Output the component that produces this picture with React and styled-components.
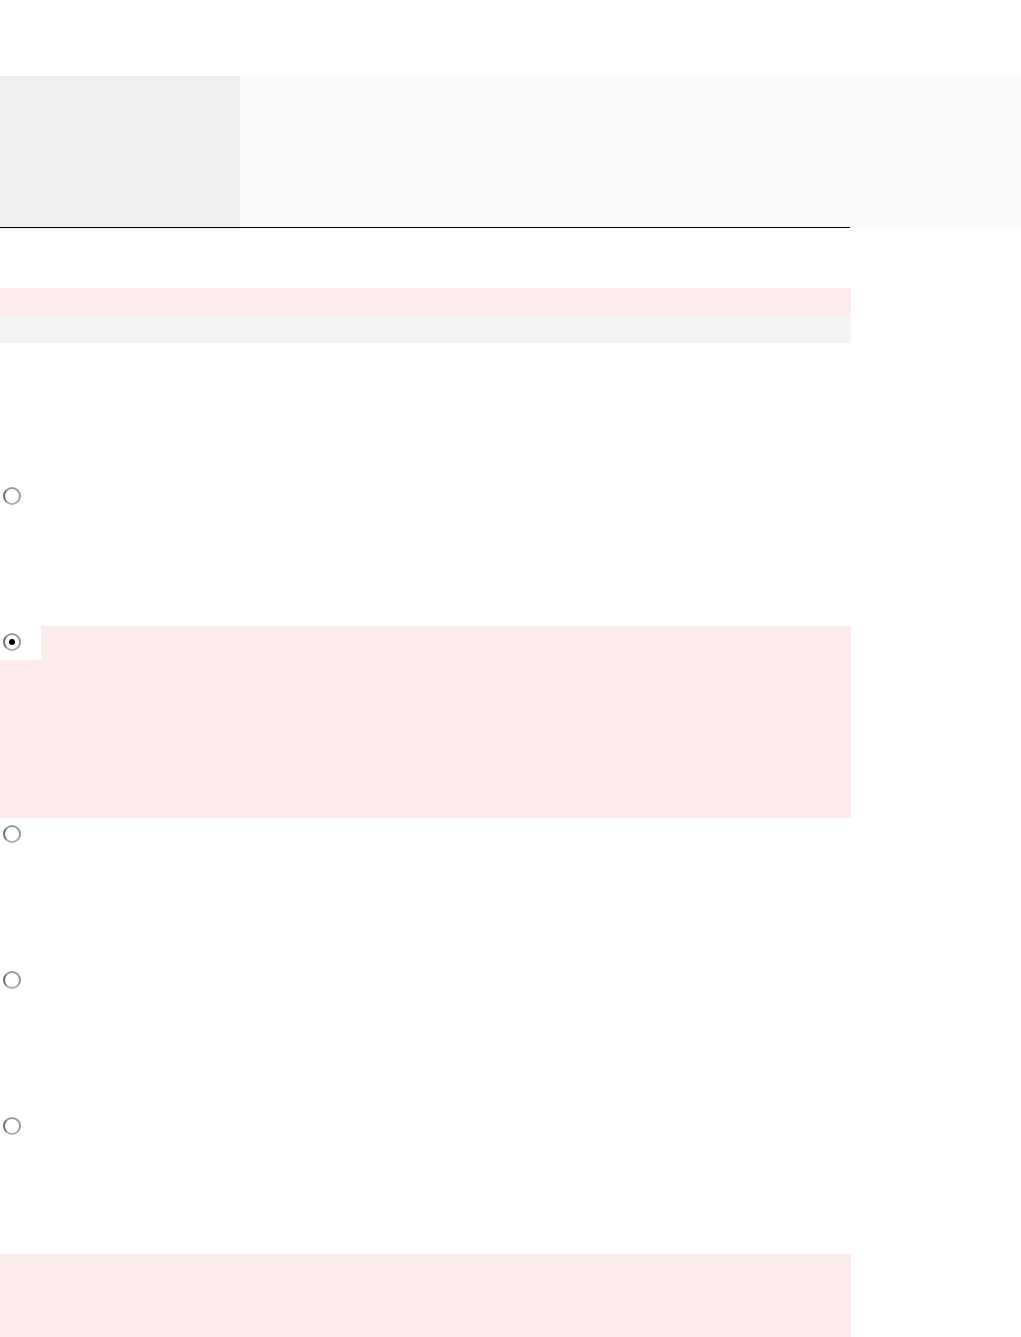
import styled, { createGlobalStyle } from 'styled-components';

const Global = createGlobalStyle`
  html, body {
    margin: 0;
    padding: 0;
    background: #ffffff;
    font-family: "Liberation Sans", Arial, sans-serif;
  }
`;

const Page = styled.div`
  padding-top: 76px;
  min-height: 1337px;
  box-sizing: border-box;
`;

const Header = styled.header`
  position: relative;
  display: flex;
  height: 153px;

  &::after {
    content: "";
    position: absolute;
    left: 0;
    top: 151px;
    width: 850px;
    height: 1px;
    background: #000000;
  }
`;

const Side = styled.div`
  width: 240px;
  background: #f0f0f0;
`;

const Banner = styled.div`
  flex: 1;
  background: #fafafa;
  height: 152px;
`;

const Content = styled.main`
  width: 851px;
`;

const Band = styled.div`
  height: ${p => p.$h}px;
  background: ${p => p.$bg};
`;

const Spacer = styled.div`
  height: ${p => p.$h}px;
`;

const Row = styled.div`
  height: ${p => p.$h}px;
  background: ${p => (p.$active ? '#fcecec' : 'transparent')};
`;

const Choice = styled.label`
  display: flex;
  align-items: flex-start;
  width: 41px;
  height: 34px;
  padding: 7px 0 0 3px;
  box-sizing: border-box;
  background: #ffffff;
`;

const Radio = styled.input.attrs({ type: 'radio', name: 'pick' })`
  appearance: none;
  margin: 0;
  width: 18px;
  height: 18px;
  border-radius: 50%;
  border: 2px solid #9a9a9a;
  border-left-color: #707070;
  border-bottom-color: #b0b0b0;
  background: #ffffff;
  box-sizing: border-box;
  display: grid;
  place-items: center;

  &:checked::before {
    content: "";
    width: 6px;
    height: 6px;
    border-radius: 50%;
    background: #000000;
  }
`;

const Bottom = styled.div`
  height: 83px;
  background: #fcecec;
`;

const rows = [
  { h: 146 },
  { h: 192, active: true },
  { h: 146 },
  { h: 146 },
  { h: 144 },
];

export default function App() {
  return (
    <Page>
      <Global />
      <Header>
        <Side />
        <Banner />
      </Header>
      <Content>
        <Spacer $h={59} />
        <Band $h={27} $bg="#fdeded" />
        <Band $h={28} $bg="#f4f4f4" />
        <Spacer $h={137} />
        {rows.map((r, i) => (
          <Row key={i} $h={r.h} $active={r.active}>
            <Choice>
              <Radio defaultChecked={!!r.active} />
            </Choice>
          </Row>
        ))}
        <Bottom />
      </Content>
    </Page>
  );
}
